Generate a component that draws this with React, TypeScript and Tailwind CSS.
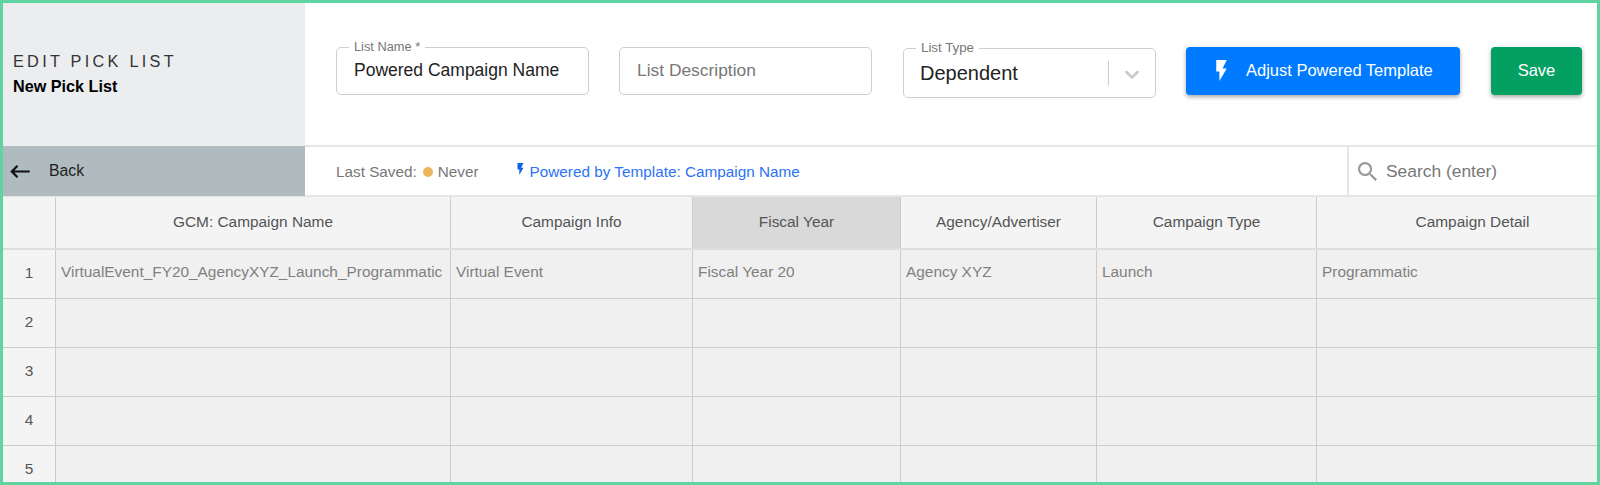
const columns = [
  { title: 'GCM: Campaign Name', value: 'VirtualEvent_FY20_AgencyXYZ_Launch_Programmatic' },
  { title: 'Campaign Info', value: 'Virtual Event' },
  { title: 'Fiscal Year', value: 'Fiscal Year 20', active: true },
  { title: 'Agency/Advertiser', value: 'Agency XYZ' },
  { title: 'Campaign Type', value: 'Launch' },
  { title: 'Campaign Detail', value: 'Programmatic' },
];

const gridCols = 'grid w-[1626px] grid-cols-[53px_395px_242px_208px_196px_220px_312px]';

function Bolt({ className }: { className: string }) {
  return (
    <svg viewBox="7 2 10 20" className={className} fill="currentColor">
      <path d="M7 2v11h3v9l7-12h-4l4-8z" />
    </svg>
  );
}

function Sidebar() {
  return (
    <div className="flex w-[302px] shrink-0 flex-col bg-[#e6e6e6]">
      <div className="flex h-[143px] flex-col bg-[#ecedef] pl-[10px] pt-[47px]">
        <h1 className="text-[16.3px] leading-[22px] tracking-[0.2em] text-[#333]">EDIT PICK LIST</h1>
        <p className="mt-[4px] text-[16.2px] font-bold leading-[20px] text-black">New Pick List</p>
      </div>
      <div className="flex h-[50px] items-center bg-[#afbbbf] pl-[7px] text-[15.8px] text-[#222]">
        <svg viewBox="3 6 18 12" className="h-[13px] w-[20px] text-[#111]" fill="currentColor">
          <path d="M21 11H6.83l3.58-3.59L9 6l-6 6 6 6 1.41-1.41L6.83 13H21z" />
        </svg>
        <span className="ml-[19px] pb-[1px]">Back</span>
      </div>
    </div>
  );
}

function Header() {
  return (
    <div className="flex h-[144px] items-start border-b-2 border-[#e6e6e6] pl-[31px] pt-[44px]">
      <div className="relative flex h-[48px] w-[253px] items-center rounded-[5px] border border-[#cfcfcf] pb-[2px] pl-[17px] text-[17.5px] text-[#222]">
        <span className="absolute -top-[8px] left-[12px] bg-white px-[5px] text-[12.8px] leading-[14px] text-[#777]">List Name *</span>
        Powered Campaign Name
      </div>

      <div className="ml-[30px] flex h-[48px] w-[253px] items-center rounded-[5px] border border-[#cfcfcf] pb-[2px] pl-[17px] text-[17.4px] text-[#777]">
        List Description
      </div>

      <div className="relative ml-[31px] mt-[1px] flex h-[50px] w-[253px] items-center rounded-[5px] border border-[#cfcfcf] pl-[16px] text-[20px] text-[#222]">
        <span className="absolute -top-[8px] left-[12px] bg-white px-[5px] text-[13.3px] leading-[14px] text-[#777]">List Type</span>
        <span className="flex-1">Dependent</span>
        <span className="h-[25px] w-px bg-[#ccc]" />
        <svg viewBox="0 0 20 20" className="mx-[11px] mt-[1px] h-[24px] w-[24px] text-[#ccc]" fill="currentColor">
          <path d="M4.516 7.548c0.436-0.446 1.043-0.481 1.576 0l3.908 3.747 3.908-3.747c0.533-0.481 1.141-0.446 1.574 0 0.436 0.445 0.408 1.197 0 1.615-0.406 0.418-4.695 4.502-4.695 4.502-0.217 0.223-0.502 0.335-0.787 0.335s-0.57-0.112-0.789-0.335c0 0-4.287-4.084-4.695-4.502s-0.436-1.17 0-1.615z" />
        </svg>
      </div>

      <button className="ml-[30px] flex h-[48px] w-[274px] items-center rounded-[4px] bg-[#007bff] pb-[2px] pl-[29px] text-[16.5px] text-white shadow-[0_2px_4px_rgba(0,0,0,0.35)]">
        <Bolt className="h-[21px] w-[13px]" />
        <span className="ml-[18px]">Adjust Powered Template</span>
      </button>

      <button className="ml-[31px] h-[48px] w-[91px] rounded-[4px] bg-[#03a062] pb-[2px] text-[16.5px] text-white shadow-[0_2px_4px_rgba(0,0,0,0.35)]">
        Save
      </button>
    </div>
  );
}

function StatusBar() {
  return (
    <div className="flex h-[50px] border-b-2 border-[#e6e6e6]">
      <div className="flex flex-1 items-center pl-[31px] pt-[2px] text-[15.3px] text-[#777]">
        <span>Last Saved:</span>
        <span className="ml-[6px] h-[10px] w-[10px] rounded-full bg-[#ecb65f]" />
        <span className="ml-[5px]">Never</span>
        <Bolt className="ml-[38px] mb-[6px] h-[12px] w-[7px] text-[#0b62f0]" />
        <span className="ml-[6px] text-[#2b72f6]">Powered by Template: Campaign Name</span>
      </div>

      <div className="flex w-[250px] items-center border-l-2 border-[#e6e6e6] pl-[9px] text-[17.4px] text-[#777]">
        <svg viewBox="3 3 17.5 17.5" className="h-[19px] w-[19px] text-[#999]" fill="currentColor">
          <path d="M15.5 14h-.79l-.28-.27C15.41 12.59 16 11.11 16 9.5 16 5.91 13.09 3 9.5 3S3 5.91 3 9.5 5.91 16 9.5 16c1.61 0 3.09-.59 4.23-1.57l.27.28v.79l5 4.99L20.49 19l-4.99-5zm-6 0C7.01 14 5 11.99 5 9.5S7.01 5 9.5 5 14 7.01 14 9.5 11.99 14 9.5 14z" />
        </svg>
        <span className="ml-[9px]">Search (enter)</span>
      </div>
    </div>
  );
}

function Sheet() {
  const rows = [1, 2, 3, 4, 5];
  return (
    <div className="min-h-0 flex-1 overflow-hidden text-[15.4px]">
      <div className={`${gridCols} h-[53px] border-b-2 border-[#dedede] bg-[#f4f4f4] text-[#555]`}>
        <div className="border-r border-[#ccc]" />
        {columns.map((col) => (
          <div
            key={col.title}
            className={`flex items-center justify-center border-r border-[#ccc] pb-[1px] ${col.active ? 'bg-[#d9d9d9]' : ''}`}
          >
            {col.title}
          </div>
        ))}
      </div>
      {rows.map((row) => (
        <div key={row} className={`${gridCols} h-[49px] border-b border-[#ccc] bg-[#f0f0f0] text-[#808080]`}>
          <div className="flex items-center justify-center border-r border-[#ccc] bg-[#f4f4f4] pb-[3px] text-[#555]">{row}</div>
          {columns.map((col) => (
            <div key={col.title} className="flex items-center whitespace-nowrap border-r border-[#ccc] pb-[5px] pl-[5px]">
              {row === 1 ? col.value : ''}
            </div>
          ))}
        </div>
      ))}
    </div>
  );
}

export default function App() {
  return (
    <div className="flex h-[485px] flex-col overflow-hidden border-[3px] border-[#5fd3a0] bg-white font-['Liberation_Sans',sans-serif]">
      <div className="flex">
        <Sidebar />
        <div className="min-w-0 flex-1">
          <Header />
          <StatusBar />
        </div>
      </div>
      <Sheet />
    </div>
  );
}
